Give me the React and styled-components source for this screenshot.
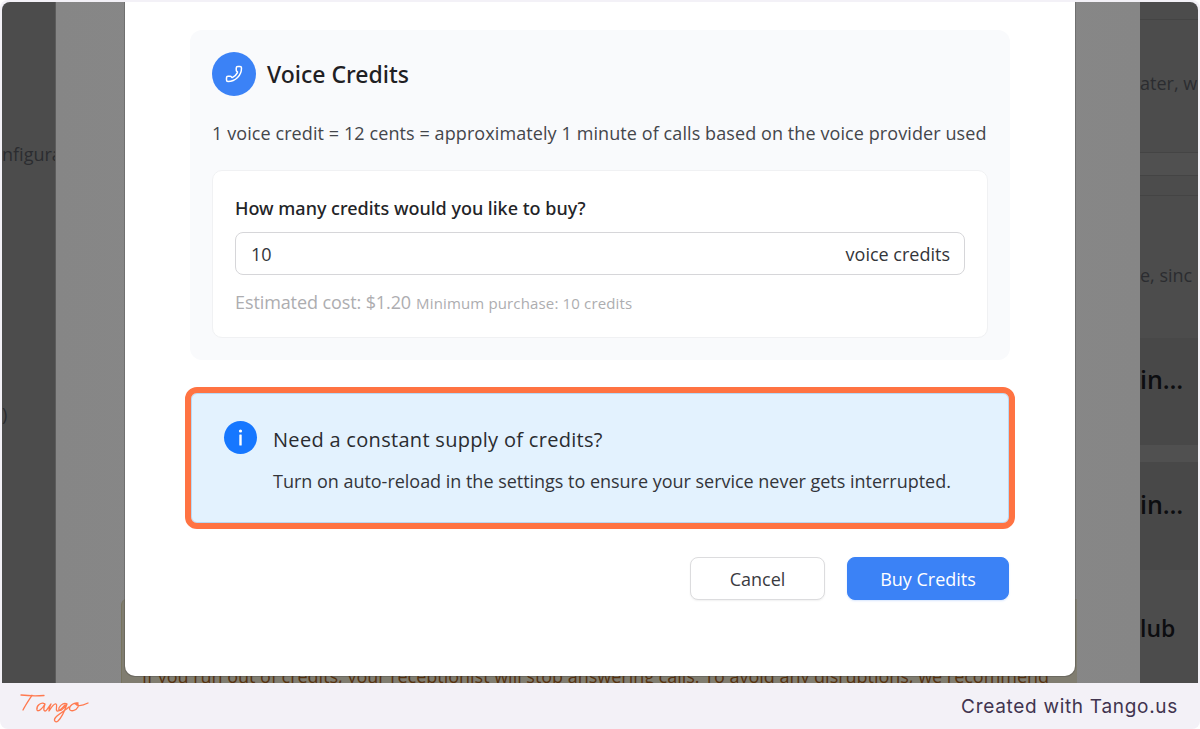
import React from "react";
import styled, { createGlobalStyle } from "styled-components";
import { Phone } from "lucide-react";

const GlobalStyle = createGlobalStyle`
  html, body {
    margin: 0;
    padding: 0;
    background: #fff;
  }
  * {
    box-sizing: border-box;
  }
`;

const Frame = styled.div`
  width: 1200px;
  height: 729px;
  display: flex;
  flex-direction: column;
  background: #f3f1f7;
  border-radius: 8px;
  font-family: "Open Sans", "Noto Sans", sans-serif;
  overflow: hidden;
`;

const Screen = styled.div`
  position: relative;
  flex: none;
  height: 681px;
  margin: 2px 2px 0;
  display: flex;
  overflow: hidden;
  border-radius: 8px 8px 0 0;
`;

const Gutter = styled.div`
  flex: none;
  width: ${(p) => p.$width}px;
  height: 100%;
  background: #4c4c4c;
  overflow: hidden;
  display: flex;
  flex-direction: column;
  white-space: nowrap;
`;

const GutterLine = styled.div`
  flex: none;
  height: ${(p) => p.$height}px;
  padding: ${(p) => p.$pad || 0};
  display: flex;
  align-items: center;
  font-size: ${(p) => p.$size || 18}px;
  font-weight: ${(p) => (p.$size ? 600 : 400)};
  color: ${(p) => (p.$size ? "#0c0d10" : "#2b2c30")};
  border-bottom: ${(p) => (p.$rule ? "1px solid #444" : "none")};
  background: ${(p) => p.$bg || "transparent"};
`;

const Backdrop = styled.div`
  flex: 1;
  display: flex;
  flex-direction: column;
  justify-content: flex-end;
  background: linear-gradient(90deg, #868686, #8b8b8b 50%, #868686);
  border-left: 1px solid #5c5c5c;
`;

const NoticeStrip = styled.div`
  height: 84px;
  margin: 0 63px 0 65px;
  padding: 67px 0 0 20px;
  background: #807d70;
  border-left: 1px solid #77745f;
  border-radius: 6px 0 0 0;
  color: #56320f;
  font-size: 18px;
  line-height: 20px;
  letter-spacing: -0.02px;
  white-space: nowrap;
  overflow: hidden;
`;

const Modal = styled.div`
  position: absolute;
  left: 123px;
  top: -2px;
  width: 950px;
  height: 676px;
  padding: 30px 65px 0;
  background: #fff;
  border-radius: 0 0 10px 10px;
  box-shadow: 0 0 0 1px rgba(60, 60, 60, 0.3);
`;

const CreditsPanel = styled.section`
  height: 330px;
  padding: 22px 22px 0;
  background: #f9fafc;
  border-radius: 12px;
`;

const PanelHeader = styled.div`
  display: flex;
  align-items: center;
  gap: 11px;
`;

const IconCircle = styled.div`
  width: 44px;
  height: 44px;
  border-radius: 50%;
  background: #3b82f6;
  color: #fff;
  display: flex;
  align-items: center;
  justify-content: center;
`;

const FlippedPhone = styled(Phone)`
  transform: scaleX(-1);
`;

const PanelTitle = styled.h2`
  margin: 0;
  font-family: "Noto Sans", sans-serif;
  font-size: 23px;
  font-weight: 500;
  color: #1f2023;
`;

const Rate = styled.p`
  margin: 24px 0 0;
  font-size: 18px;
  line-height: 26px;
  letter-spacing: 0.09px;
  color: #44464b;
  white-space: nowrap;
`;

const QuantityCard = styled.div`
  height: 168px;
  margin-top: 24px;
  padding: 24px 22px 0;
  background: #fff;
  border: 1px solid #f0f1f3;
  border-radius: 10px;
`;

const QuantityLabel = styled.div`
  font-family: "Noto Sans", sans-serif;
  font-size: 18px;
  line-height: 26px;
  font-weight: 500;
  color: #232427;
`;

const InputRow = styled.div`
  height: 43px;
  margin-top: 11px;
  padding: 0 14px 0 15px;
  display: flex;
  align-items: center;
  justify-content: space-between;
  border: 1px solid #d6d6d9;
  border-radius: 8px;
  font-size: 18px;
  color: #33353a;
`;

const Hint = styled.div`
  margin-top: 14px;
  display: flex;
  align-items: baseline;
  gap: 5px;
  font-size: 18px;
  line-height: 26px;
  letter-spacing: -0.1px;
  color: #adadb0;
  white-space: nowrap;
`;

const HintSmall = styled.span`
  font-size: 15px;
  letter-spacing: 0.15px;
`;

const Callout = styled.section`
  height: 130px;
  margin: 33px 1px 0;
  padding: 27px 32px 0;
  display: flex;
  gap: 16px;
  background: #e3f2fe;
  border: 1px solid #b7d9f5;
  border-radius: 6px;
  outline: 6px solid #ff7342;
`;

const InfoDot = styled.div`
  flex: none;
  width: 33px;
  height: 33px;
  border-radius: 50%;
  background: #1677ff;
  color: #fff;
  display: flex;
  align-items: center;
  justify-content: center;
`;

const CalloutBody = styled.div`
  margin-top: 5px;
`;

const CalloutTitle = styled.div`
  font-size: 20px;
  line-height: 28px;
  letter-spacing: 0.3px;
  color: #2a2c30;
`;

const CalloutText = styled.div`
  margin-top: 14px;
  font-size: 18px;
  line-height: 26px;
  letter-spacing: -0.02px;
  color: #33353a;
  white-space: nowrap;
`;

const Actions = styled.div`
  margin-top: 34px;
  padding-right: 1px;
  display: flex;
  justify-content: flex-end;
  gap: 22px;
`;

const Button = styled.button`
  width: ${(p) => (p.$primary ? 162 : 135)}px;
  height: 43px;
  padding: 0;
  border-radius: 8px;
  border: 1px solid ${(p) => (p.$primary ? "#3b82f6" : "#dcdcde")};
  background: ${(p) => (p.$primary ? "#3b82f6" : "#fff")};
  color: ${(p) => (p.$primary ? "#fff" : "#3a3b3f")};
  box-shadow: 0 1px 2px ${(p) => (p.$primary ? "rgba(59,130,246,0.2)" : "rgba(0,0,0,0.06)")};
  font-family: inherit;
  font-size: 18px;
`;

const Footer = styled.footer`
  flex: 1;
  display: flex;
  align-items: center;
  justify-content: space-between;
  padding: 0 22px 0 20px;
`;

const TangoMark = styled.svg`
  display: block;
  width: 70px;
  height: 32px;
  margin-top: 4px;
`;

const Credit = styled.div`
  font-family: "Inter", sans-serif;
  font-size: 19px;
  letter-spacing: 0.7px;
  color: #41344f;
`;

const App = () => (
  <Frame>
    <GlobalStyle />
    <Screen>
      <Gutter $width={53}>
        <GutterLine $height={130} />
        <GutterLine $height={44}>nfigura</GutterLine>
        <GutterLine $height={216} />
        <GutterLine $height={44}>)</GutterLine>
      </Gutter>
      <Backdrop>
        <NoticeStrip>If you run out of credits, your receptionist will stop answering calls. To avoid any disruptions, we recommend</NoticeStrip>
      </Backdrop>
      <Gutter $width={58}>
        <GutterLine $height={18} $rule />
        <GutterLine $height={133} $pad="0 0 7px" $rule>ater, wh</GutterLine>
        <GutterLine $height={23} $bg="#505050" $rule />
        <GutterLine $height={20} $rule />
        <GutterLine $height={142} $pad="16px 0 0">e, sinc</GutterLine>
        <GutterLine $height={107} $pad="0 0 25px" $size={25} $bg="#484848">in…</GutterLine>
        <GutterLine $height={17} $bg="#505050" />
        <GutterLine $height={108} $pad="0 0 24px" $size={25} $bg="#484848">in…</GutterLine>
        <GutterLine $height={116} $size={23}>lub</GutterLine>
      </Gutter>
      <Modal>
        <CreditsPanel>
          <PanelHeader>
            <IconCircle><FlippedPhone size={18} strokeWidth={2} /></IconCircle>
            <PanelTitle>Voice Credits</PanelTitle>
          </PanelHeader>
          <Rate>1 voice credit = 12 cents = approximately 1 minute of calls based on the voice provider used</Rate>
          <QuantityCard>
            <QuantityLabel>How many credits would you like to buy?</QuantityLabel>
            <InputRow>
              <span>10</span>
              <span>voice credits</span>
            </InputRow>
            <Hint>
              Estimated cost: $1.20
              <HintSmall>Minimum purchase: 10 credits</HintSmall>
            </Hint>
          </QuantityCard>
        </CreditsPanel>
        <Callout>
          <InfoDot>
            <svg width="5" height="17" viewBox="0 0 5 17" fill="currentColor">
              <circle cx="2.5" cy="2" r="1.6" />
              <rect x="1.3" y="5.5" width="2.4" height="11" rx="0.5" />
            </svg>
          </InfoDot>
          <CalloutBody>
            <CalloutTitle>Need a constant supply of credits?</CalloutTitle>
            <CalloutText>Turn on auto-reload in the settings to ensure your service never gets interrupted.</CalloutText>
          </CalloutBody>
        </Callout>
        <Actions>
          <Button>Cancel</Button>
          <Button $primary>Buy Credits</Button>
        </Actions>
      </Modal>
    </Screen>
    <Footer>
      <TangoMark viewBox="0 0 70 32" fill="none" stroke="#ff7a50" strokeWidth="1.3" strokeLinecap="round" strokeLinejoin="round">
        <path d="M1 3C8 3.8 16 4 24 3.5" />
        <path d="M12 3.2C9 8 5.5 13 3 18" />
        <path d="M25 12C21 9.5 16 14 17 18C18 20.5 23 16 25 12C24 15 23 19 25 19C27 19 29 14 31 12C30 14 29 17 29 19C31 16 34 11 36 12C38 13 35 17 37 19C39 20 42 16 45 13" />
        <path d="M47 12C43 10 38 15 39 18C40 20 44 16 47 12C45 18 42 25 38 29C35 31.5 33 28 36 25C40 21 46 18 49 15" />
        <path d="M58 11C54 10 49 14 49.5 17C50 20 56 19 58 15C59 12 57 10.5 55 11.5C57 14 62 14 68 11" />
      </TangoMark>
      <Credit>Created with Tango.us</Credit>
    </Footer>
  </Frame>
);

export default App;
